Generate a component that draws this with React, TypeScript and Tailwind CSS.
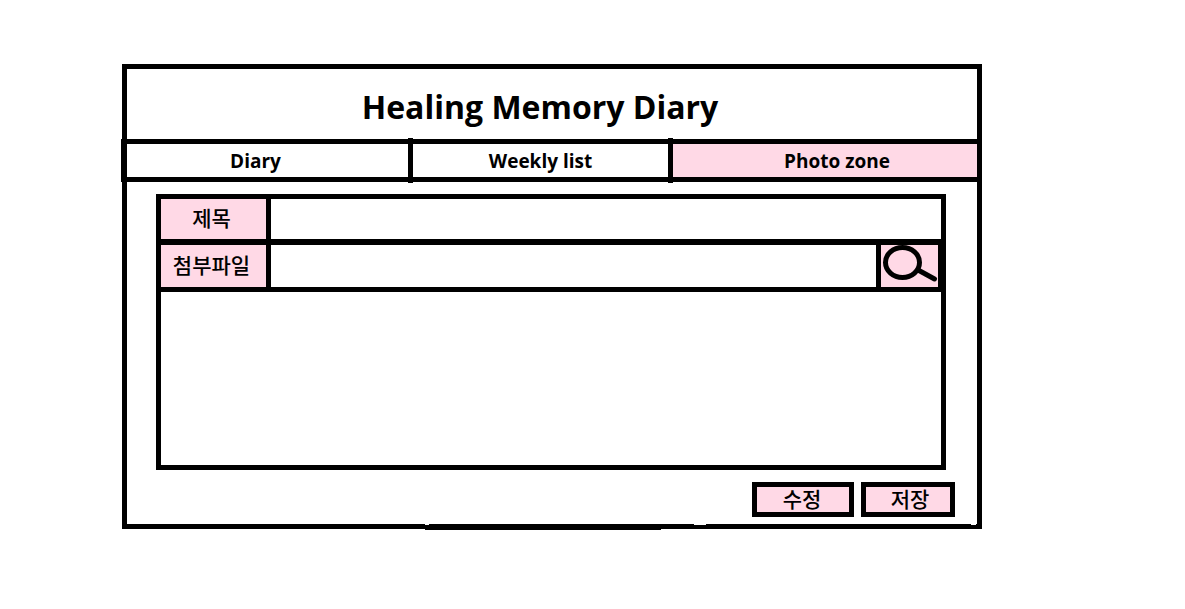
import React from "react";

const labelClass =
  "flex w-[110px] shrink-0 items-center justify-center border-r-[5px] border-black bg-[#ffd9e6] pr-1 pb-0.5 text-[21px] leading-8 font-medium";

function Divider() {
  return <span aria-hidden="true" className="-my-1.5 bg-black" />;
}

export default function App() {
  return (
    <div className="min-h-screen bg-white pt-16 pr-[203px] pb-10 pl-[122px] font-['Open_Sans','Noto_Sans_CJK_KR',sans-serif] text-black">
      <main className="relative border-[5px] border-black">
        <header className="flex h-[70px] items-center justify-center pt-1.5 pr-6">
          <h1 className="text-[32px] leading-10 font-bold">Healing Memory Diary</h1>
        </header>

        <nav className="-ml-1.5 grid h-[43px] grid-cols-[281fr_5px_255fr_5px_304fr] border-y-[5px] border-l-[6px] border-black text-[19px] leading-8 font-bold">
          <a href="#diary" className="flex items-center justify-center pr-6">
            Diary
          </a>
          <Divider />
          <a href="#weekly" className="flex items-center justify-center">
            Weekly list
          </a>
          <Divider />
          <a href="#photo" aria-current="page" className="flex items-center justify-center bg-[#ffd9e6] pl-6">
            Photo zone
          </a>
        </nav>

        <form className="pt-3 pb-[7px]" onSubmit={(e) => e.preventDefault()}>
          <div className="mr-[31px] ml-[29px] border-[5px] border-black">
            <div className="flex h-[46px] border-b-[6px] border-black">
              <label htmlFor="title" className={labelClass}>
                제목
              </label>
              <input id="title" type="text" className="min-w-0 flex-1 px-3 outline-none" />
            </div>
            <div className="flex h-[47px] border-b-[5px] border-black">
              <label htmlFor="file" className={labelClass}>
                첨부파일
              </label>
              <input id="file" type="text" className="min-w-0 flex-1 px-3 outline-none" />
              <button
                type="button"
                aria-label="파일 찾기"
                className="w-[65px] shrink-0 border-r-[3px] border-l-[5px] border-black bg-[#ffd9e6]"
              >
                <svg viewBox="0 0 57 42" className="h-[42px] w-[57px]" fill="none" stroke="black" strokeWidth="5" strokeLinecap="round">
                  <ellipse cx="21.500" cy="17.500" rx="17" ry="15" />
                  <path d="M38 25.500L53.500 34" />
                </svg>
              </button>
            </div>
            <textarea aria-label="내용" className="block h-[173px] w-full resize-none p-3 outline-none" />
          </div>

          <div className="mt-3 mr-[22px] flex justify-end gap-[7px] text-[21px] leading-6 font-medium">
            <button type="button" className="h-[35px] w-[102px] border-[5px] border-black bg-[#ffd9e6] pr-0.5 pb-0.5">
              수정
            </button>
            <button type="submit" className="h-[35px] w-[94px] border-[5px] border-black bg-[#ffd9e6] pb-0.5 pl-1">
              저장
            </button>
          </div>
        </form>

        <svg
          aria-hidden="true"
          viewBox="0 0 860 6"
          preserveAspectRatio="none"
          className="pointer-events-none absolute -right-[5px] -bottom-1.5 -left-[5px] h-1.5 w-[calc(100%+10px)]"
          shapeRendering="crispEdges"
        >
          <path d="M303 5H539V6H303Z" fill="black" />
          <path d="M303 0H307V1H303ZM572 0H584V1H572ZM849 0H854V1H849Z" fill="white" />
        </svg>
      </main>
    </div>
  );
}
